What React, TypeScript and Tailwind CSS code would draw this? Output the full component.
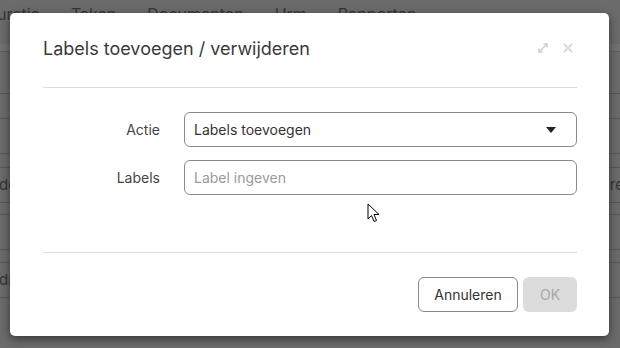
import { X } from 'lucide-react'

const navItems = ['uratie', 'Taken', 'Documenten', 'Urm', 'Rapporten']

const rows = [
  { h: 'h-[42px]' },
  { h: 'h-[25px]' },
  { h: 'h-[35px]' },
  { h: 'h-[14px]' },
  { h: 'h-[35px]', left: 'do', right: 're' },
  { h: 'h-[12px]' },
  { h: 'h-[35px]' },
  { h: 'h-[13px]' },
  { h: 'h-[35px]', left: 'dr' },
]

function ExpandIcon() {
  return (
    <svg width="12" height="12" viewBox="0 0 12 12" fill="none" stroke="#d0d0d0" strokeWidth="1.6">
      <path d="M2 10 L10 2" />
      <path d="M6.5 2 H10 V5.5" />
      <path d="M2 6.5 V10 H5.5" />
    </svg>
  )
}

function Cursor() {
  return (
    <svg width="13" height="20" viewBox="0 0 13 20" className="absolute left-[367px] top-[203px]">
      <path
        d="M1 1 L1 16 L4.5 12.5 L7 18.5 L9.5 17.5 L7 11.5 L12 11.5 Z"
        fill="#fff"
        stroke="#000"
        strokeWidth="1"
        strokeLinejoin="round"
      />
    </svg>
  )
}

export default function App() {
  return (
    <div className="relative w-[620px] h-[348px] overflow-hidden bg-[#6b6b6b] font-['Inter','Liberation_Sans',sans-serif]">
      {/* Page behind the overlay */}
      <div className="flex flex-col">
        <div className="h-[44px] flex items-start gap-[31px] -ml-[3px] pt-[2px] text-[16px] text-[#353535]">
          {navItems.map((item) => (
            <span key={item}>{item}</span>
          ))}
        </div>
        <div className="h-[8px] bg-[#727272] border-b border-[#5e5e5e]"></div>
        {rows.map((row, i) => (
          <div
            key={i}
            className={`${row.h} flex items-center justify-between border-b border-[#575757] text-[15px] text-[#353535]`}
          >
            <span className="-ml-[1px]">{row.left ?? ''}</span>
            <span className="-mr-[4px]">{row.right ?? ''}</span>
          </div>
        ))}
      </div>

      {/* Modal */}
      <div className="absolute left-[10px] top-[13px] w-[599px] h-[323px] bg-white rounded-[5px] shadow-[0_3px_10px_rgba(0,0,0,0.5)] pl-[33px] pr-[32px] flex flex-col">
        <div className="h-[75px] pt-[23px] border-b border-[#dedede]">
          <div className="h-[25px] flex items-center justify-between">
            <h2 className="text-[18px] text-[#3a3a3a]">Labels toevoegen / verwijderen</h2>
            <div className="flex items-center gap-[12px] -mt-[2px] pr-[2px]">
              <ExpandIcon />
              <X size={14} strokeWidth={3} className="text-[#d0d0d0]" />
            </div>
          </div>
        </div>

        <div className="h-[165px] pt-[24px] flex flex-col gap-[13px] border-b border-[#dedede]">
          <div className="flex items-center gap-[24px]">
            <label className="w-[117px] text-right text-[14px] text-[#444]">Actie</label>
            <div className="flex-1 h-[35px] border border-[#8a8a8a] rounded-[6px] flex items-center justify-between pl-[9px] pr-[20px] text-[14px] text-[#333]">
              <span>Labels toevoegen</span>
              <svg width="10" height="6" viewBox="0 0 10 6">
                <path d="M0 0 H10 L5 6 Z" fill="#222" />
              </svg>
            </div>
          </div>
          <div className="flex items-center gap-[24px]">
            <label className="w-[117px] text-right text-[14px] text-[#444]">Labels</label>
            <div className="flex-1 h-[35px] border border-[#8a8a8a] rounded-[6px] flex items-center pl-[9px] text-[14px] text-[#9a9a9a]">
              Label ingeven
            </div>
          </div>
        </div>

        <div className="pt-[24px] flex justify-end gap-[5px]">
          <button className="w-[100px] h-[35px] border border-[#8a8a8a] rounded-[6px] text-[14px] text-[#333] bg-white">
            Annuleren
          </button>
          <button className="w-[54px] h-[35px] rounded-[6px] bg-[#dcdcdc] text-[14px] text-[#a8a8a8]">
            OK
          </button>
        </div>
      </div>

      <Cursor />
    </div>
  )
}
